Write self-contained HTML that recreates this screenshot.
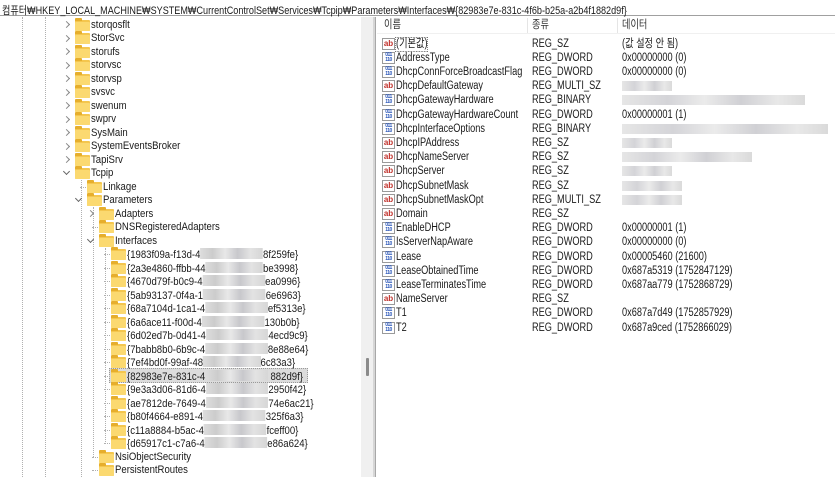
<!DOCTYPE html>
<html><head><meta charset="utf-8"><style>
*{margin:0;padding:0;box-sizing:border-box}
body{width:835px;height:477px;overflow:hidden;background:#fff;font-family:"Liberation Sans","Noto Sans CJK KR",sans-serif;font-size:11px;color:#1a1a1a;position:relative}
.a{position:absolute;white-space:nowrap}
#addr{left:0;top:0;width:835px;height:16px;border-bottom:1px solid #a0a0a0}
#addr span{position:absolute;left:2px;top:2px;transform:scaleX(0.825);transform-origin:0 0}
.f{position:absolute;width:15px;height:11px;background:#f4c64e;border-radius:1px}
.f:before{content:"";position:absolute;left:0;top:-2px;width:7px;height:3px;background:#e6ae2c;border-radius:1px 1px 0 0}
.f:after{content:"";position:absolute;left:0;top:2px;width:15px;height:9px;background:#fbd970;border-radius:1px}
.cr{position:absolute;width:5px;height:5px;border-right:1px solid #888;border-bottom:1px solid #888;transform:rotate(-45deg)}
.cd{position:absolute;width:5px;height:5px;border-right:1px solid #666;border-bottom:1px solid #666;transform:rotate(45deg)}
.t{position:absolute;white-space:nowrap;line-height:13px;transform:scaleX(0.87);transform-origin:0 0}
.r{font-size:11.5px;transform:scaleX(0.8)}
.b{display:inline-block;height:11px;vertical-align:-1px;background:linear-gradient(90deg,#ddd,#ccc 20%,#e8e8e8 40%,#c8c8cc 60%,#e3e3e3 80%,#d6d6d6)}
.vd{position:absolute;width:0;border-left:1px dotted #b0b0b0}
.hd{position:absolute;height:0;border-top:1px dotted #b0b0b0;width:6px}
.ic{position:absolute;width:13px;height:12px;border:1px solid #9a9a9a;background:#fff;font-size:8px;font-weight:bold;line-height:10px;text-align:center}
.ab{color:#c0302a}
.dw{color:#2a56b8;font-size:5px;line-height:5px;letter-spacing:-0.5px}
.bl{position:absolute;height:10px;background:linear-gradient(90deg,#e6e6e6,#d4d4d8 25%,#ebebeb 45%,#d0d0d4 65%,#e8e8e8 85%,#dadada)}
</style></head><body>
<div id="addr" class="a"><span>컴퓨터₩HKEY_LOCAL_MACHINE₩SYSTEM₩CurrentControlSet₩Services₩Tcpip₩Parameters₩Interfaces₩{82983e7e-831c-4f6b-b25a-a2b4f1882d9f}</span></div>

<div class="vd" style="left:22px;top:17px;height:460px"></div>
<div class="vd" style="left:45px;top:17px;height:460px"></div>
<div class="vd" style="left:81px;top:180px;height:297px"></div>
<div class="vd" style="left:93px;top:207px;height:250px"></div>
<div class="vd" style="left:105px;top:248px;height:196px"></div>

<div class="a" style="left:361px;top:17px;width:12px;height:460px;background:#f0f0f0"></div>
<div class="a" style="left:366px;top:358px;width:3px;height:18px;background:#8a8a8a;border-radius:1px"></div>
<div class="a" style="left:373px;top:17px;width:3px;height:460px;background:#d6d6d6;border-right:1px solid #a8a8a8"></div>

<div class="a" style="left:109px;top:368px;width:199px;height:15px;background:#dcdcdc;border:1px dotted #999"></div>

<div id="tree"></div>

<div class="a" style="left:377px;top:17px;width:458px;height:17px;border-bottom:1px solid #f0f0f0"></div>
<div class="a" style="left:527px;top:18px;width:1px;height:15px;background:#e5e5e5"></div>
<div class="a" style="left:617px;top:18px;width:1px;height:15px;background:#e5e5e5"></div>
<div class="t r" style="left:384px;top:19px;color:#333">이름</div>
<div class="t r" style="left:532px;top:19px;color:#333">종류</div>
<div class="t r" style="left:622px;top:19px;color:#333">데이터</div>
<div id="vals"></div>

<script>
var L=[
[0,1,"storqosflt"],[0,1,"StorSvc"],[0,1,"storufs"],[0,1,"storvsc"],[0,1,"storvsp"],[0,1,"svsvc"],[0,1,"swenum"],[0,1,"swprv"],[0,1,"SysMain"],[0,1,"SystemEventsBroker"],[0,1,"TapiSrv"],[0,2,"Tcpip"],
[1,0,"Linkage"],[1,2,"Parameters"],[2,1,"Adapters"],[2,0,"DNSRegisteredAdapters"],[2,2,"Interfaces"],
[3,0,"{1983f09a-f13d-4|8f259fe}"],[3,0,"{2a3e4860-ffbb-44|be3998}"],[3,0,"{4670d79f-b0c9-4|ea0996}"],[3,0,"{5ab93137-0f4a-1|6e6963}"],[3,0,"{68a7104d-1ca1-4|ef5313e}"],[3,0,"{6a6ace11-f00d-4|130b0b}"],[3,0,"{6d02ed7b-0d41-4|4ecd9c9}"],[3,0,"{7babb8b0-6b9c-4|8e88e64}"],[3,0,"{7ef4bd0f-99af-48|6c83a3}"],[3,0,"{82983e7e-831c-4| 882d9f}"],[3,0,"{9e3a3d06-81d6-4|2950f42}"],[3,0,"{ae7812de-7649-4|74e6ac21}"],[3,0,"{b80f4664-e891-4|325f6a3}"],[3,0,"{c11a8884-b5ac-4|fceff00}"],[3,0,"{d65917c1-c7a6-4|e86a624}"],
[2,0,"NsiObjectSecurity"],[2,0,"PersistentRoutes"]];
var h="";
L.forEach(function(r,i){var y=17.5+i*13.5;var lv=r[0];var fx=75+lv*12;
if(r[1]==1)h+='<div class="cr" style="left:'+(fx-11)+'px;top:'+(y+4.5)+'px"></div>';
else if(r[1]==2)h+='<div class="cd" style="left:'+(fx-11)+'px;top:'+(y+3)+'px"></div>';
else h+='<div class="hd" style="left:'+(fx-7)+'px;top:'+(y+7)+'px"></div>';
h+='<div class="f" style="left:'+fx+'px;top:'+(y+2)+'px"></div>';
var t=r[2];var bw=0;if(t.indexOf("|")>0){var p=t.split("|");bw=(272-127-p[0].length*5.15)/0.87;t=p[0]+'<span class="b" style="width:'+bw+'px"></span>'+p[1];}
h+='<div class="t" style="left:'+(fx+16)+'px;top:'+(y+1)+'px">'+t+'</div>';});
document.getElementById("tree").innerHTML=h;
var V=[["a","(기본값)","REG_SZ","(값 설정 안 됨)"],["d","AddressType","REG_DWORD","0x00000000 (0)"],["d","DhcpConnForceBroadcastFlag","REG_DWORD","0x00000000 (0)"],["a","DhcpDefaultGateway","REG_MULTI_SZ",50],["d","DhcpGatewayHardware","REG_BINARY",183],["d","DhcpGatewayHardwareCount","REG_DWORD","0x00000001 (1)"],["d","DhcpInterfaceOptions","REG_BINARY",206],["a","DhcpIPAddress","REG_SZ",50],["a","DhcpNameServer","REG_SZ",130],["a","DhcpServer","REG_SZ",50],["a","DhcpSubnetMask","REG_SZ",60],["a","DhcpSubnetMaskOpt","REG_MULTI_SZ",60],["a","Domain","REG_SZ",""],["d","EnableDHCP","REG_DWORD","0x00000001 (1)"],["d","IsServerNapAware","REG_DWORD","0x00000000 (0)"],["d","Lease","REG_DWORD","0x00005460 (21600)"],["d","LeaseObtainedTime","REG_DWORD","0x687a5319 (1752847129)"],["d","LeaseTerminatesTime","REG_DWORD","0x687aa779 (1752868729)"],["a","NameServer","REG_SZ",""],["d","T1","REG_DWORD","0x687a7d49 (1752857929)"],["d","T2","REG_DWORD","0x687a9ced (1752866029)"]];
h="";
V.forEach(function(r,i){var y=36.5+i*14.2;
h+= r[0]=="a"?'<div class="ic ab" style="left:382px;top:'+(y+1)+'px">ab</div>':'<div class="ic dw" style="left:382px;top:'+(y+1)+'px">011<br>110</div>';
h+='<div class="t r" style="left:396px;top:'+(y+1)+'px;'+(i==0?'outline:1px dotted #666;':'')+'">'+r[1]+'</div>';
h+='<div class="t r" style="left:532px;top:'+(y+1)+'px">'+r[2]+'</div>';
if(typeof r[3]=="number")h+='<div class="bl" style="left:622px;top:'+(y+2)+'px;width:'+r[3]+'px"></div>';
else h+='<div class="t r" style="left:622px;top:'+(y+1)+'px">'+r[3]+'</div>';});
document.getElementById("vals").innerHTML=h;
</script>
</body></html>
